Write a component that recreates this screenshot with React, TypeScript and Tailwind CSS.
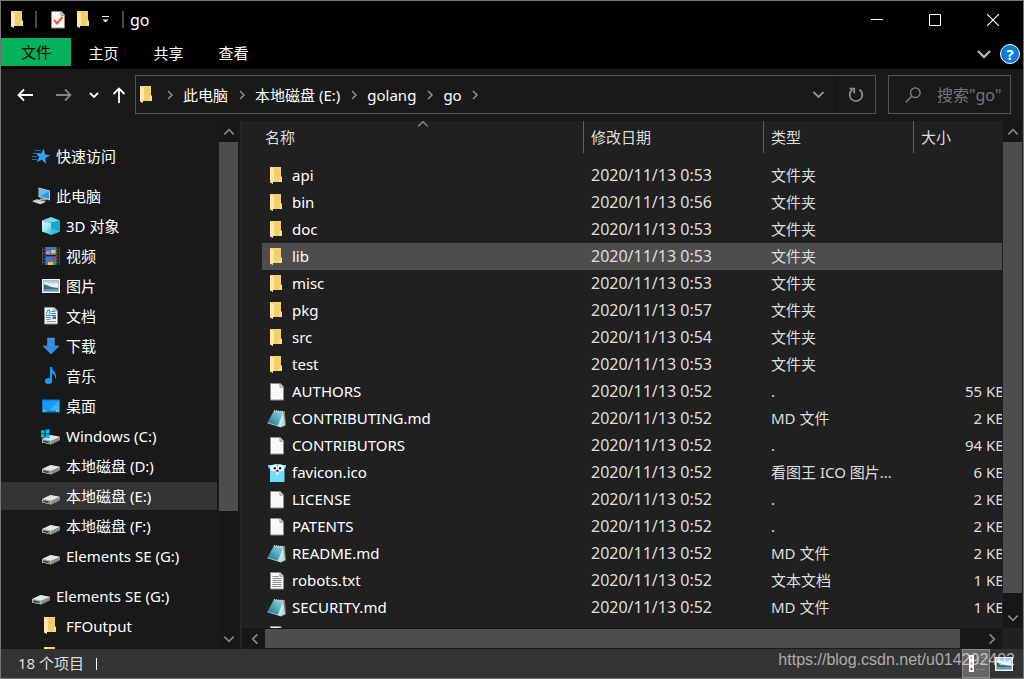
import { ReactNode } from "react";

type IconName =
  | "folder" | "file" | "text" | "md" | "gopher" | "check" | "star" | "pc" | "cube"
  | "video" | "picture" | "document" | "download" | "music" | "desktop" | "windows" | "drive";

const drive = (
  <>
    <path d="M0 12.2 8.5 8.2 18 10v3.2L9.6 17.4 0 15.2Z" fill="#8d8d8d" />
    <path d="M0 12 8.5 8 18 9.8 9 13.8Z" fill="#e6e6e6" />
    <path d="M0 12 9 13.8v3.6L0 15.4Z" fill="#b9b9b9" />
    <path d="M1.2 13.2 8 14.6v1.8l-6.8-1.5Z" fill="#3c3c3c" />
    <path d="M5.8 14.4h1.8v1.4H5.8Z" fill="#31d843" />
  </>
);

const page = (
  <>
    <path d="M2.500.500h9.700L15.500 4v13h-13Z" fill="#f7f8f9" stroke="#8f8f8f" />
    <path d="M12 .500V4.200h3.500" fill="#dcdcdc" stroke="#8f8f8f" />
  </>
);

const drawings: Record<IconName, ReactNode> = {
  folder: (
    <>
      <path d="M2 0h11v9.500h1V15H5L2 14Z" fill="#f7d774" />
      <path d="M6 1h7v9h1v5H6Z" fill="#f3cf6c" />
      <path d="M2 .5 6 2.500V15H5v2L2 15.500Z" fill="#ffe9a9" />
      <path d="M12 10h2v5h-3Z" fill="#ffdf86" />
    </>
  ),
  file: page,
  text: (
    <>
      {page}
      <path d="M4.500 4.500h6M4.500 6.500h9M4.500 8.500h9M4.500 10.500h9M4.500 12.500h9M4.500 14.500h9" stroke="#8b8b8b" />
    </>
  ),
  md: (
    <>
      <defs>
        <linearGradient id="pad-cover" x1="0" y1="1" x2="1" y2="0">
          <stop offset="0" stopColor="#1e6a7c" />
          <stop offset=".55" stopColor="#5cb1c2" />
          <stop offset="1" stopColor="#a9dbe3" />
        </linearGradient>
      </defs>
      <path d="M16 2h1l1 13-2.500 2Z" fill="#8b7443" />
      <path d="M6 .5 16 1.500 11.500 16-.5 12.500Z" fill="url(#pad-cover)" />
      <path d="M15.500 2 17 15l-4 2.500-3.500-1.500Z" fill="#b5dfe7" />
      <path d="m14.800 6-3.300 10.500" stroke="#e4f5f8" strokeWidth=".8" />
      <path d="M6 .8 16.500 1.800" stroke="#cfdde0" strokeWidth="1.400" strokeDasharray="1 1" />
      <path d="M-.5 12.800 11.500 16.500" stroke="#a9ced6" />
    </>
  ),
  gopher: (
    <>
      <path d="M2 18V5L0 3V1h4.500L7 0h5l2.500 1H18v2l-1.500 2v13Z" fill="#70ddfa" />
      <circle cx="5.800" cy="4" r="3.300" fill="#fff" />
      <circle cx="12.800" cy="4" r="3.300" fill="#fff" />
      <circle cx="6.800" cy="4.200" r="1.200" fill="#171717" />
      <circle cx="12" cy="4.200" r="1.200" fill="#171717" />
      <ellipse cx="9.400" cy="8" rx="2.200" ry="1.500" fill="#efcfac" />
      <ellipse cx="9.400" cy="6.800" rx="1.300" ry=".9" fill="#1d1d1d" />
      <path d="M8.600 8.800h1.600v2H8.600Z" fill="#fff" />
    </>
  ),
  check: (
    <>
      {page}
      <path d="m5 9 3 3.500L13.500 6" fill="none" stroke="#f15a24" strokeWidth="2" />
    </>
  ),
  star: (
    <>
      <path d="m11.900 1.600 1 5.600 5.500 1.200-5 2.600.6 5.700-4.100-4-5.200 2.400L7.200 10 3.400 5.700l5.700.8Z" fill="#2fa4fa" />
      <path d="M3 3.500h6M1 6.500h4.500M0 9.500h5M0 12.500h5" stroke="#1674b5" />
    </>
  ),
  pc: (
    <>
      <path d="M6.500.5 18 3.500v10L6.500 10Z" fill="#c9ced2" />
      <path d="M7.500 1.800 17 4.200v7.900L7.500 9.200Z" fill="#2d97ea" />
      <path d="M7.500 1.800 17 4.200 8.500 9.200l-1-.3Z" fill="#5fbbf8" />
      <path d="m9 11.200 6 1.200-3 1.300-5-1.200Z" fill="#a7adb1" />
      <path d="m0 14.200 5-2 9 2.600-5.500 2.500Z" fill="#e0e4e7" />
      <path d="m3 14.200 2.500-1M5.500 15l3-1.200M8 15.700l3-1.200" stroke="#8e9498" strokeWidth=".6" />
    </>
  ),
  cube: (
    <>
      <defs>
        <linearGradient id="cube-left" x1="0" y1="0" x2=".6" y2="1">
          <stop offset="0" stopColor="#d2f4f5" />
          <stop offset=".6" stopColor="#a5e8ee" />
          <stop offset="1" stopColor="#4cc9dd" />
        </linearGradient>
      </defs>
      <path d="m0 3.500 9-3.500 9 3.500-9 2.500Z" fill="#72dbe9" />
      <path d="M0 3.500 9 6v12l-9-3.500Z" fill="url(#cube-left)" />
      <path d="M18 3.500 9 6v12l9-3.500Z" fill="#1ba6cf" />
      <path d="M9 11.500 18 14.500 9 18Z" fill="#3fc0da" />
    </>
  ),
  video: (
    <>
      <path d="M0 0h18v18H0Z" fill="#4b4b4b" />
      <path d="M4 0h10v18H4Z" fill="#3f74d0" />
      <path d="M4 4h4v3H4Z" fill="#d878bc" />
      <path d="M9 3h4.500v3.500H9Z" fill="#f2c629" />
      <path d="M9 6.500h4v1.500H9Z" fill="#4d9c40" />
      <path d="M4 8.700h10" stroke="#151515" strokeWidth="1.200" />
      <path d="M10 10h3v2h-3Z" fill="#d9322a" />
      <path d="M6 15h5v3H6Z" fill="#f2c629" />
      <path d="M1.800 0v18M16.200 0v18" stroke="#111" strokeWidth="1.600" strokeDasharray="2 1.200" />
    </>
  ),
  picture: (
    <>
      <path d="M0 2h18v14H0Z" fill="#f4f4f4" />
      <path d="M1 3h16v12H1Z" fill="#b8b8b8" />
      <path d="M2 4h14v10H2Z" fill="#a2d0f4" />
      <path d="M2 5.500c3-1 5 1 8 1s4-1 6 0v4H2Z" fill="#e4f2fc" />
      <path d="M2 7.500c4 .5 7 3.500 14 3.500v1H2Z" fill="#3f6a62" />
      <path d="M2 12h14v2H2Z" fill="#5d9cc4" />
    </>
  ),
  document: (
    <>
      {page}
      <path d="M4 7.500 6 3h1.500l.5 4.500M9.500 4.500h2.500M9.500 6.500h4.500M4 8.500h10M4 10.500h5" fill="none" stroke="#2588cf" />
      <path d="M10.500 9.500H14V12h-3.500Z" fill="#37637c" />
      <path d="M4.500 12.500H9M4.500 14.500H14" stroke="#909090" />
    </>
  ),
  download: <path d="M5.500 1h7v8H17l-8 8-8-8h4.500Z" fill="#348ee2" stroke="#54a5ef" strokeWidth=".5" />,
  music: (
    <>
      <path d="M8 0h2c0 4 5 5 4 11h-1c.5-3-1-4-3-4.500V14H8Z" fill="#10a0fb" />
      <ellipse cx="6.500" cy="14" rx="3.600" ry="2.900" fill="#10a0fb" />
    </>
  ),
  desktop: (
    <>
      <path d="M0 2.500h18v13H0Z" fill="#0878cd" />
      <path d="M1 3.500h16v10H1Z" fill="#149bf7" />
      <path d="M17 3.500v10H7Z" fill="#3db0fb" />
      <path d="M1 14h1.500M3.500 14h1M14 14h1M16 14h1" stroke="#fff" />
    </>
  ),
  windows: (
    <>
      {drive}
      <path d="M-1 3.500 2.600 3v3.500H-1ZM3.500 2.800 7.500 2v4.500h-4ZM-1 7.300h3.600v3.500L-1 10.300ZM3.500 7.300h4V11.500l-4-.6Z" fill="#00bdf2" />
    </>
  ),
  drive,
};

function Icon({ name }: { name: IconName }) {
  return (
    <svg viewBox="0 0 18 18" className="size-[18px] shrink-0 overflow-visible" aria-hidden="true">
      {drawings[name]}
    </svg>
  );
}

const chevrons = {
  up: "m2 8 4-4 4 4",
  down: "m2 4 4 4 4-4",
  left: "M8 2 4 6l4 4",
  right: "m4 2 4 4-4 4",
};

function Chevron({ dir, className }: { dir: keyof typeof chevrons; className: string }) {
  return (
    <svg viewBox="0 0 12 12" className={className} fill="none" stroke="currentColor" aria-hidden="true">
      <path d={chevrons[dir]} />
    </svg>
  );
}

function ScrollButton({ dir, label }: { dir: keyof typeof chevrons; label: string }) {
  return (
    <button aria-label={label} className="flex size-[21px] shrink-0 items-center justify-center text-[#858585]">
      <Chevron dir={dir} className="size-[14px] stroke-[1.5]" />
    </button>
  );
}

const tree: { label: string; icon: IconName; top?: boolean; gap?: boolean; current?: boolean }[] = [
  { label: "快速访问", icon: "star", top: true },
  { label: "此电脑", icon: "pc", top: true, gap: true },
  { label: "3D 对象", icon: "cube" },
  { label: "视频", icon: "video" },
  { label: "图片", icon: "picture" },
  { label: "文档", icon: "document" },
  { label: "下载", icon: "download" },
  { label: "音乐", icon: "music" },
  { label: "桌面", icon: "desktop" },
  { label: "Windows (C:)", icon: "windows" },
  { label: "本地磁盘 (D:)", icon: "drive" },
  { label: "本地磁盘 (E:)", icon: "drive", current: true },
  { label: "本地磁盘 (F:)", icon: "drive" },
  { label: "Elements SE (G:)", icon: "drive" },
  { label: "Elements SE (G:)", icon: "drive", top: true, gap: true },
  { label: "FFOutput", icon: "folder" },
  { label: "", icon: "folder" },
];

const files: [string, IconName, string, string, string][] = [
  ["api", "folder", "0:53", "文件夹", ""],
  ["bin", "folder", "0:56", "文件夹", ""],
  ["doc", "folder", "0:53", "文件夹", ""],
  ["lib", "folder", "0:53", "文件夹", ""],
  ["misc", "folder", "0:53", "文件夹", ""],
  ["pkg", "folder", "0:57", "文件夹", ""],
  ["src", "folder", "0:54", "文件夹", ""],
  ["test", "folder", "0:53", "文件夹", ""],
  ["AUTHORS", "file", "0:52", ".", "55 KB"],
  ["CONTRIBUTING.md", "md", "0:52", "MD 文件", "2 KB"],
  ["CONTRIBUTORS", "file", "0:52", ".", "94 KB"],
  ["favicon.ico", "gopher", "0:52", "看图王 ICO 图片...", "6 KB"],
  ["LICENSE", "file", "0:52", ".", "2 KB"],
  ["PATENTS", "file", "0:52", ".", "2 KB"],
  ["README.md", "md", "0:52", "MD 文件", "2 KB"],
  ["robots.txt", "text", "0:52", "文本文档", "1 KB"],
  ["SECURITY.md", "md", "0:52", "MD 文件", "1 KB"],
];

const crumbs = ["此电脑", "本地磁盘 (E:)", "golang", "go"];

function TitleBar() {
  return (
    <div className="flex h-[37px] shrink-0 items-center bg-black pr-px pl-2">
      <Icon name="folder" />
      <span className="ml-2 h-[17px] w-[2px] bg-[#4a4a4a]" />
      <button aria-label="属性" className="ml-3"><Icon name="check" /></button>
      <button aria-label="新建文件夹" className="ml-2"><Icon name="folder" /></button>
      <button aria-label="自定义快速访问工具栏" className="ml-2">
        <svg viewBox="0 0 9 9" className="size-[9px]" aria-hidden="true">
          <path d="M1 1.500h7" stroke="#fff" />
          <path d="M1.500 4.500h6l-3 3Z" fill="#fff" />
        </svg>
      </button>
      <span className="ml-3 h-[17px] w-[2px] bg-[#4a4a4a]" />
      <h1 className="ml-[6px] text-base leading-5 text-white">go</h1>
      <div className="ml-auto flex h-full">
        <button aria-label="最小化" className="flex w-[58px] items-center justify-center">
          <svg viewBox="0 0 12 12" className="size-3"><path d="M0 5.500h12" stroke="#fff" /></svg>
        </button>
        <button aria-label="最大化" className="flex w-[58px] items-center justify-center">
          <svg viewBox="0 0 12 12" className="size-3"><path d="M.5.5h11v11H.5Z" fill="none" stroke="#fff" /></svg>
        </button>
        <button aria-label="关闭" className="flex w-[58px] items-center justify-center">
          <svg viewBox="0 0 12 12" className="size-3"><path d="m0 0 12 12m0-12L0 12" stroke="#fff" strokeWidth="1.200" /></svg>
        </button>
      </div>
    </div>
  );
}

function Ribbon() {
  return (
    <div className="flex h-[31px] shrink-0 items-start bg-black text-white">
      <button className="h-7 w-[70px] bg-[#04b15d] leading-7 text-black">文件</button>
      {["主页", "共享", "查看"].map((tab) => (
        <button key={tab} className="h-[31px] w-[65px] leading-[31px]">{tab}</button>
      ))}
      <div className="ml-auto flex h-[31px] items-center gap-[7px] pr-[3px]">
        <button aria-label="展开功能区" className="text-[#b4b4b4]">
          <Chevron dir="down" className="size-[18px] stroke-[1.6]" />
        </button>
        <button aria-label="帮助" className="flex size-5 items-center justify-center rounded-full border border-white bg-[#0d7bdd] font-bold leading-4">?</button>
      </div>
    </div>
  );
}

function NavBar() {
  return (
    <div className="flex shrink-0 items-stretch pt-[6px] pr-3 pb-[7px] pl-1">
      <button aria-label="后退" className="flex w-[39px] items-center justify-center">
        <svg viewBox="0 0 16 14" className="h-[14px] w-4" fill="none" stroke="#fff" strokeWidth="1.800"><path d="M16 7H1.500M7 1.500 1.500 7 7 12.500" /></svg>
      </button>
      <button aria-label="前进" className="flex w-[39px] items-center justify-center">
        <svg viewBox="0 0 16 14" className="h-[14px] w-4" fill="none" stroke="#858585" strokeWidth="1.800"><path d="M0 7h14.500M9 1.500 14.500 7 9 12.500" /></svg>
      </button>
      <button aria-label="最近浏览的位置" className="flex w-[21px] items-center justify-center text-white">
        <Chevron dir="down" className="size-3 stroke-[1.8]" />
      </button>
      <button aria-label="上移" className="mr-px flex w-[30px] items-center justify-center">
        <svg viewBox="0 0 14 16" className="h-4 w-[14px]" fill="none" stroke="#fff" strokeWidth="1.800"><path d="M7 16V1.500M1.500 7 7 1.500 12.500 7" /></svg>
      </button>
      <div className="flex h-[39px] min-w-0 grow items-center border border-[#535353] pl-[2px] text-white">
        <Icon name="folder" />
        {crumbs.map((crumb) => (
          <div key={crumb} className="flex items-center">
            <span className="flex w-[27px] justify-center text-[#909090]">
              <Chevron dir="right" className="size-3 stroke-[1.5]" />
            </span>
            <button className="whitespace-nowrap leading-5">{crumb}</button>
          </div>
        ))}
        <button aria-label="展开" className="flex w-[27px] justify-center text-[#909090]">
          <Chevron dir="right" className="size-3 stroke-[1.5]" />
        </button>
        <button aria-label="以前的位置" className="ml-auto flex h-full w-[37px] items-center justify-center border-r border-[#131313] text-[#909090]">
          <Chevron dir="down" className="size-[15px] stroke-[1.5]" />
        </button>
        <button aria-label="刷新" className="flex h-full w-[38px] items-center justify-center">
          <svg viewBox="0 0 16 16" className="size-4" fill="none" stroke="#8d8d8d" strokeWidth="1.800">
            <path d="M11.500 2.600A6.300 6.300 0 1 1 4.500 2.600" />
            <path d="M1.500 1.700h4.700v4.600" />
          </svg>
        </button>
      </div>
      <div className="ml-3 flex w-[123px] shrink-0 items-center border border-[#535353] pl-4">
        <svg viewBox="0 0 16 16" className="size-4 shrink-0" fill="none" stroke="#858585" strokeWidth="1.300" aria-hidden="true">
          <circle cx="10.300" cy="5.700" r="4.800" />
          <path d="M6.700 9.300.7 15.300" />
        </svg>
        <input type="text" aria-label="搜索" placeholder={'搜索"go"'} className="ml-4 h-7 w-full min-w-0 bg-transparent text-base text-white outline-none placeholder:text-[#757575]" />
      </div>
    </div>
  );
}

function Sidebar() {
  return (
    <div className="flex w-[241px] shrink-0 border-r-2 border-[#262626]">
      <nav className="min-w-0 grow overflow-hidden pt-[21px] text-white">
        {tree.map((item, i) => (
          <a
            key={i}
            href="#"
            className={`mb-[2px] flex h-7 items-center gap-[6px] whitespace-nowrap leading-7 ${item.top ? "pl-[31px]" : "pl-[41px]"} ${item.gap ? "mt-3" : ""} ${item.current ? "bg-[#333333]" : ""}`}
          >
            <Icon name={item.icon} />
            {item.label}
          </a>
        ))}
      </nav>
      <div className="mr-[2px] ml-[2px] flex w-[19px] shrink-0 flex-col items-center bg-[#171717]">
        <ScrollButton dir="up" label="向上滚动" />
        <div className="w-full grow"><div className="h-[76%] w-full bg-[#4d4d4d]" /></div>
        <ScrollButton dir="down" label="向下滚动" />
      </div>
    </div>
  );
}

function FileTable() {
  const head = "flex h-8 items-center border-l border-[#636363] pl-[7px]";
  return (
    <table className="w-[calc(100%+3px)] table-fixed border-collapse text-left whitespace-nowrap text-[#dedede]">
      <thead>
        <tr className="h-[41px] align-top">
          <th className="p-0 font-normal">
            <div className="relative flex h-8 items-center pl-[3px]">
              名称
              <Chevron dir="up" className="absolute -top-1 left-1/2 size-[14px] -translate-x-1/2 text-[#a0a0a0]" />
            </div>
          </th>
          <th className="w-[180px] p-0 font-normal"><div className={head}>修改日期</div></th>
          <th className="w-[150px] p-0 font-normal"><div className={head}>类型</div></th>
          <th className="w-[92px] p-0 font-normal"><div className={head}>大小</div></th>
        </tr>
      </thead>
      <tbody>
        {files.map(([name, icon, time, kind, size]) => (
          <tr key={name} className={`h-[27px] leading-[27px] ${name === "lib" ? "bg-[#4d4d4d]" : ""}`}>
            <td className="p-0">
              <div className="flex items-center gap-[6px] pl-[6px] text-white"><Icon name={icon} />{name}</div>
            </td>
            <td className="p-0 pl-2 text-base leading-[27px]">2020/11/13 {time}</td>
            <td className="p-0 pl-2">{kind}</td>
            <td className="p-0 text-right">{size}</td>
          </tr>
        ))}
        <tr className="h-[27px]">
          <td className="p-0"><div className="pl-[6px]"><Icon name="file" /></div></td>
        </tr>
      </tbody>
    </table>
  );
}

export default function App() {
  return (
    <div className="relative flex h-screen flex-col overflow-hidden border border-[#777777] bg-[#191919] font-['Noto_Sans','Noto_Sans_CJK_SC',sans-serif] text-[15px]">
      <TitleBar />
      <Ribbon />
      <NavBar />
      <div className="flex min-h-0 grow">
        <Sidebar />
        <main className="flex min-w-0 grow flex-col bg-[#202020]">
          <div className="flex min-h-0 grow">
            <div className="min-w-0 grow overflow-hidden pl-5"><FileTable /></div>
            <div className="mr-px ml-px flex w-[19px] shrink-0 flex-col items-center bg-[#171717]">
              <ScrollButton dir="up" label="向上滚动" />
              <div className="w-full grow"><div className="h-[97%] w-full bg-[#4d4d4d]" /></div>
              <ScrollButton dir="down" label="向下滚动" />
            </div>
          </div>
          <div className="mr-[21px] flex h-[21px] shrink-0 items-center bg-[#171717] pl-[2px]">
            <ScrollButton dir="left" label="向左滚动" />
            <div className="h-[19px] grow"><div className="h-full w-[97%] bg-[#4d4d4d]" /></div>
            <ScrollButton dir="right" label="向右滚动" />
          </div>
        </main>
      </div>
      <footer className="flex h-[29px] shrink-0 items-center bg-[#333333] pl-[17px] text-[#dedede]">
        <span>18 个项目</span>
        <span className="ml-3 h-3 w-px bg-white" />
        <div className="ml-auto flex h-full items-center pr-[10px]">
          <button aria-label="详细信息" className="flex h-full w-7 items-center border border-[#8a8a8a] bg-[#666666] pl-1">
            <svg viewBox="0 0 20 18" className="h-[18px] w-5" aria-hidden="true">
              <path d="M2 0h5v17H2Z" fill="#fff" />
              <path d="M3.500 2h2v2h-2Z" fill="#6d9fc4" />
              <path d="M3.500 7.500h2v2h-2Z" fill="#d57a30" />
              <path d="M3.500 13h2v2h-2Z" fill="#bc2f2f" />
              <path d="M9 2.500h4m1 0h4M9 8.500h4m1 0h4M9 14.500h4m1 0h4" stroke="#858585" />
            </svg>
          </button>
          <button aria-label="大缩略图" className="ml-[5px]"><Icon name="picture" /></button>
        </div>
      </footer>
      <div className="pointer-events-none absolute right-2 bottom-2 font-['Liberation_Sans',sans-serif] text-base leading-5 text-white/60">
        https://blog.csdn.net/u014292402
      </div>
    </div>
  );
}
